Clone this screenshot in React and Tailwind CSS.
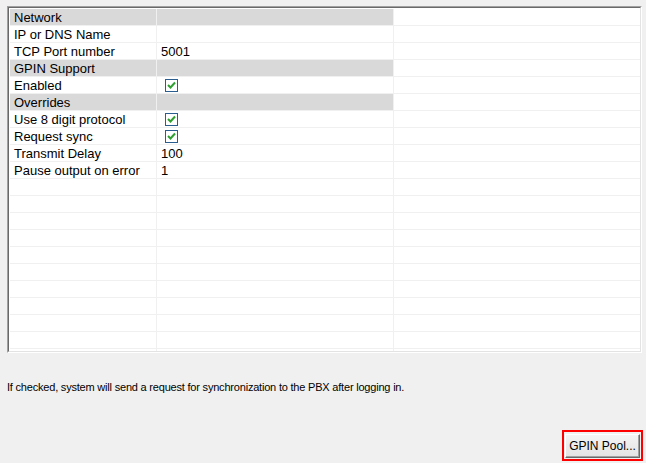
import React from "react";

const rows = [
    { header: true, label: "Network" },
    { label: "IP or DNS Name", value: "" },
    { label: "TCP Port number", value: "5001" },
    { header: true, label: "GPIN Support" },
    { label: "Enabled", check: true },
    { header: true, label: "Overrides" },
    { label: "Use 8 digit protocol", check: true },
    { label: "Request sync", check: true },
    { label: "Transmit Delay", value: "100" },
    { label: "Pause output on error", value: "1" },
];

const CheckBox = () => (
    <span className="flex h-[13px] w-[13px] items-center justify-center border border-[#2b5d8e] bg-white">
        <svg width="9" height="8" viewBox="0 0 9 8">
            <path
                d="M1 4 L3.5 6.5 L8 1.5"
                fill="none"
                stroke="#2ea02e"
                strokeWidth="2"
            />
        </svg>
    </span>
);

const GridRow = ({ row }) => {
    const fill = row.header ? "bg-[#dad9da]" : "bg-white";
    return (
        <div className="flex h-[17px] shrink-0 border-b border-[#f0f0f0]">
            <div
                className={`flex w-[147px] shrink-0 items-center border-r border-[#f0f0f0] pl-[4px] pt-[1px] ${fill}`}
            >
                {row.label}
            </div>
            <div
                className={`flex w-[237px] shrink-0 items-center border-r border-[#f0f0f0] ${fill} ${
                    row.check ? "pl-[8px]" : "pl-[4px] pt-[1px]"
                }`}
            >
                {row.check ? <CheckBox /> : row.value}
            </div>
            <div className="flex-1 bg-white"></div>
        </div>
    );
};

const App = () => {
    const empty = Array.from({ length: 11 }, (_, i) => ({ label: "", value: "", key: i }));

    return (
        <div className="h-[463px] w-[646px] overflow-hidden bg-[#f0f0f0] font-['Liberation_Sans',Arial,sans-serif] text-black">
            <div className="pl-[7px] pt-[6px]">
                <div className="h-[347px] w-[635px] border border-b-white border-l-[#a0a0a0] border-r-white border-t-[#a0a0a0]">
                    <div className="flex h-full flex-col overflow-hidden border border-b-[#e3e3e3] border-l-[#696969] border-r-[#e3e3e3] border-t-[#696969] bg-white pl-[1px] pt-[1px] text-[13px] leading-none">
                        {rows.map((row, i) => (
                            <GridRow key={i} row={row} />
                        ))}
                        {empty.map((row) => (
                            <GridRow key={`e${row.key}`} row={row} />
                        ))}
                    </div>
                </div>
            </div>

            <p className="ml-[7px] mt-[28px] text-[11px] leading-[13px] tracking-[-0.2px]">
                If checked, system will send a request for synchronization to the PBX after logging in.
            </p>

            <div className="mr-[3px] mt-[36px] flex justify-end">
                <div className="border-2 border-[#ff0000] p-[1px]">
                    <button className="h-[24px] w-[75px] border border-b-[#696969] border-l-white border-r-[#696969] border-t-white bg-gradient-to-b from-[#f4f4f4] to-[#e3e3e3] text-[12px] leading-none shadow-[inset_-1px_-1px_0_#a0a0a0]">
                        GPIN Pool...
                    </button>
                </div>
            </div>
        </div>
    );
};

export default App;
